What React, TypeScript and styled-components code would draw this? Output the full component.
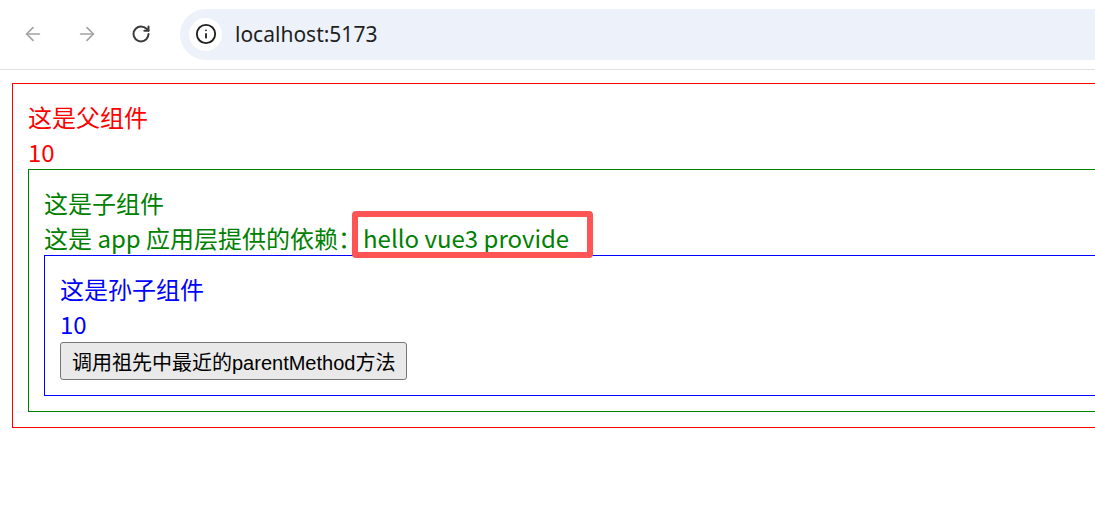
import React from "react";
import styled, { createGlobalStyle } from "styled-components";
import { ArrowLeft, ArrowRight, RotateCw, Info } from "lucide-react";

const GlobalStyle = createGlobalStyle`
  html, body {
    margin: 0;
    padding: 0;
    overflow: hidden;
    background: #ffffff;
  }
  *, *::before, *::after { box-sizing: border-box; }
`;

const Window = styled.div`
  width: 1095px;
  height: 513px;
  overflow: hidden;
  background: #ffffff;
`;

const Toolbar = styled.div`
  height: 70px;
  display: flex;
  align-items: center;
  border-bottom: 1px solid #dedede;
  padding-left: 21px;
  padding-bottom: 1px;
`;

const NavButton = styled.div<{ $dim?: boolean; $last?: boolean }>`
  width: 24px;
  height: 24px;
  display: flex;
  align-items: center;
  justify-content: center;
  color: ${(p) => (p.$dim ? "#a3a3a3" : "#3c3c3c")};
  margin-right: ${(p) => (p.$last ? "27px" : "30px")};
`;

const Omnibox = styled.div`
  flex: 1;
  height: 51px;
  background: #edf2fa;
  border-radius: 26px 0 0 26px;
  display: flex;
  align-items: center;
  padding-left: 9px;
`;

const InfoChip = styled.div`
  width: 33px;
  height: 33px;
  border-radius: 50%;
  background: #ffffff;
  display: flex;
  align-items: center;
  justify-content: center;
  color: #1f1f1f;
`;

const Url = styled.span`
  margin-left: 13px;
  font-family: "Noto Sans", "Open Sans", sans-serif;
  font-size: 21px;
  color: #1f1f1f;
`;

const Page = styled.div`
  width: 1300px;
  padding: 13px 12px 0 12px;
  font-family: "Noto Sans CJK SC", "Noto Sans", sans-serif;
  font-size: 24px;
  line-height: 35px;
`;

const Frame = styled.div<{ $color: string }>`
  border: 1px solid ${(p) => p.$color};
  color: ${(p) => p.$color};
  padding: 15px;
  display: flex;
  flex-direction: column;
  align-items: stretch;
`;

const Line = styled.div`
  height: 35px;
  white-space: nowrap;
`;

const Marked = styled.span`
  position: relative;
  display: inline-block;
  margin-left: 1px;
  &::after {
    content: "";
    position: absolute;
    left: -11px;
    top: -9px;
    width: 241px;
    height: 47px;
    border: 6px solid #ff5454;
    border-radius: 4px;
    pointer-events: none;
  }
`;

const ActionButton = styled.button`
  align-self: flex-start;
  margin-top: 1px;
  height: 38px;
  padding: 0 11px;
  font-family: "Liberation Sans", "Noto Sans CJK SC", sans-serif;
  font-size: 20px;
  color: #000000;
  background: #e9e9e9;
  border: 1px solid #767676;
  border-radius: 3px;
  white-space: nowrap;
  cursor: default;
`;

export default function App() {
  return (
    <>
      <GlobalStyle />
      <Window>
        <Toolbar>
          <NavButton $dim>
            <ArrowLeft size={22} strokeWidth={1.8} />
          </NavButton>
          <NavButton $dim>
            <ArrowRight size={22} strokeWidth={1.8} />
          </NavButton>
          <NavButton $last>
            <RotateCw size={20} strokeWidth={2.4} />
          </NavButton>
          <Omnibox>
            <InfoChip>
              <Info size={22} strokeWidth={2} />
            </InfoChip>
            <Url>localhost:5173</Url>
          </Omnibox>
        </Toolbar>
        <Page>
          <Frame $color="#ff0000">
            <Line>这是父组件</Line>
            <Line>10</Line>
            <Frame $color="#008000">
              <Line>这是子组件</Line>
              <Line>
                这是 app 应用层提供的依赖：<Marked>hello vue3 provide</Marked>
              </Line>
              <Frame $color="#0000ff">
                <Line>这是孙子组件</Line>
                <Line>10</Line>
                <ActionButton>调用祖先中最近的parentMethod方法</ActionButton>
              </Frame>
            </Frame>
          </Frame>
        </Page>
      </Window>
    </>
  );
}
